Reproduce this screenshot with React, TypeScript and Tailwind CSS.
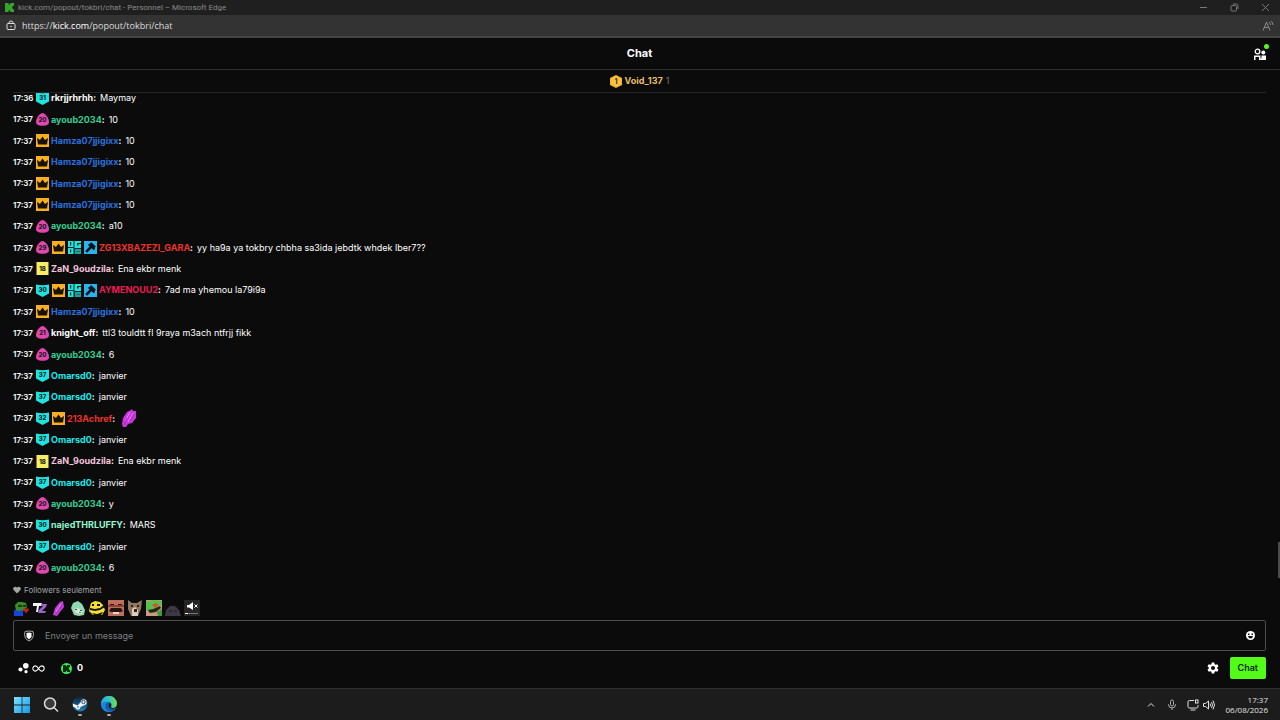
import { useState } from 'react';
import type { ReactNode } from 'react';

type Badge = 'crown' | 'og' | 'mod' | { kind: 'shield' | 'egg' | 'square'; level: number };

interface Message {
  time: string;
  badges: Badge[];
  user: string;
  color: string;
  text?: string;
  emote?: boolean;
}

const shield = (level: number): Badge => ({ kind: 'shield', level });
const egg = (level: number): Badge => ({ kind: 'egg', level });
const square = (level: number): Badge => ({ kind: 'square', level });

const ayoub = (text: string): Message => ({
  time: '17:37', badges: [egg(20)], user: 'ayoub2034', color: 'text-[#2fcf93]', text,
});
const hamza = (text: string): Message => ({
  time: '17:37', badges: ['crown'], user: 'Hamza07jjigixx', color: 'text-[#2a70de]', text,
});
const omar = (text: string): Message => ({
  time: '17:37', badges: [shield(37)], user: 'Omarsd0', color: 'text-[#1ce9e9]', text,
});
const zan = (text: string): Message => ({
  time: '17:37', badges: [square(18)], user: 'ZaN_9oudzila', color: 'text-[#f2c3dc]', text,
});

const messages: Message[] = [
  { time: '17:36', badges: [shield(31)], user: 'rkrjjrhrhh', color: 'text-white', text: 'Maymay' },
  ayoub('10'),
  hamza('10'),
  hamza('10'),
  hamza('10'),
  hamza('10'),
  ayoub('a10'),
  {
    time: '17:37', badges: [egg(29), 'crown', 'og', 'mod'], user: 'ZG13XBAZEZI_GARA', color: 'text-[#f0322a]',
    text: 'yy ha9a ya tokbry chbha sa3ida jebdtk whdek lber7??',
  },
  zan('Ena ekbr menk'),
  { time: '17:37', badges: [shield(30), 'crown', 'og', 'mod'], user: 'AYMENOUU2', color: 'text-[#ee1a55]', text: '7ad ma yhemou la79i9a' },
  hamza('10'),
  { time: '17:37', badges: [egg(21)], user: 'knight_off', color: 'text-white', text: 'ttl3 touldtt fl 9raya m3ach ntfrjj fikk' },
  ayoub('6'),
  omar('janvier'),
  omar('janvier'),
  { time: '17:37', badges: [shield(32), 'crown'], user: '213Achref', color: 'text-[#f0322a]', emote: true },
  omar('janvier'),
  zan('Ena ekbr menk'),
  omar('janvier'),
  ayoub('y'),
  { time: '17:37', badges: [shield(30)], user: 'najedTHRLUFFY', color: 'text-[#93f7cf]', text: 'MARS' },
  omar('janvier'),
  ayoub('6'),
];

function BadgeIcon({ badge }: { badge: Badge }) {
  if (badge === 'crown') {
    return (
      <svg viewBox="0 0 13 13" className="size-[13px] shrink-0">
        <path fill="#f9b01c" d="M0 0h13v13H0z" />
        <path fill="#191204" d="M1 4l3 2 2.5-3.500L9 6l3-2-1 6.500H2z" />
      </svg>
    );
  }
  if (badge === 'og') {
    return (
      <svg viewBox="0 0 13 13" className="size-[13px] shrink-0">
        <path fill="#0c2c2d" d="M0 0h13v13H0z" />
        <path fill="#22e2dc" fillRule="evenodd" d="M0 0h5.500v6H0zM2 1v3.500h1.200V1zM0 7h5.500v6H0zM2 8.500v3h1.200v-3zM6.500 0H13v2H9v2.500h1.500V3H13v4H6.500z" />
        <path fill="#1ba3a3" d="M7 8h6v5H7z" />
        <path stroke="#157277" d="M8 10.500h4" />
      </svg>
    );
  }
  if (badge === 'mod') {
    return (
      <svg viewBox="0 0 13 13" className="size-[13px] shrink-0">
        <path fill="#28b4ee" d="M0 0h13v13H0z" />
        <path fill="#06131b" d="M7 1l4.800 4.500-1 1.200.2 1.300-1.300 1.200L7.500 7.300l-4.300 4.500L1.200 10l4.400-4.500L4 4l1.200-1.200H6z" />
      </svg>
    );
  }
  return (
    <svg viewBox="0 0 13 13" className="size-[13px] shrink-0">
      {badge.kind === 'shield' && <path fill="#1ee4df" d="M0 .5Q6.500 1.800 13 .5v9L6.500 13 0 9.500z" />}
      {badge.kind === 'egg' && <path fill="#e046ac" d="M6.500 0C9.500 0 13 5.500 13 9c0 2.500-2 3.700-6.500 3.700S0 11.500 0 9c0-3.500 3.500-9 6.500-9z" />}
      {badge.kind === 'square' && <path fill="#f7ec62" d="M.5 0h12v13H.5z" />}
      <text
        x="6.5"
        y={badge.kind === 'shield' ? 8 : 9}
        textAnchor="middle"
        fontSize="6"
        fontWeight="800"
        fill="#11191b"
      >
        {badge.level}
      </text>
    </svg>
  );
}

function Wing({ className }: { className: string }) {
  return (
    <svg viewBox="0 0 16 18" className={className}>
      <path fill="#c936df" d="M1 15l1-6 4-6 4-2 1-1 1 2 3 0v7l-4 5-4 1-2 3H2z" />
      <path fill="none" stroke="#f07cf7" d="M4 12l5-9M7 13l5-9" />
      <path fill="none" stroke="#a52fb9" d="M3 16l3-7M9 12l4-7" />
    </svg>
  );
}

const emotes: { name: string; art: ReactNode }[] = [
  {
    name: 'pepe',
    art: (
      <>
        <path fill="#3d8b28" d="M2 5l3-3 4 0 4 1 1 4-3 4H3z" />
        <path fill="#163a12" d="M5 5h4v2H5zM10 5h3v2h-3z" />
        <path fill="#1445d8" d="M1 10l5 1 4-1v6H1z" />
        <path fill="#bd2118" d="M11 8l2 1 2-1 1 2-3 3-3-3z" />
      </>
    ),
  },
  {
    name: 'tz',
    art: (
      <>
        <path fill="#f3f3f3" d="M1 3h9L9 6H7l-1 6H4l1-6H1z" />
        <path fill="#9c62c8" d="M9 4h6l-1 3-4 4h4l-1 2H6l1-3 4-4H9z" />
      </>
    ),
  },
  {
    name: 'wing',
    art: (
      <>
        <path fill="#c63fdb" d="M2 15l2-7 5-6 3-1 1 6-4 5-3 4z" />
        <path stroke="#f07cf7" d="M5 12l5-8" />
        <path stroke="#8e2fa2" d="M5 14l6-9" />
      </>
    ),
  },
  {
    name: 'mint',
    art: (
      <>
        <path fill="#8fd8b4" d="M1 8l2-5 5-2 4 3 3 6-1 5-5 1-5-1z" />
        <path fill="#d5e8d8" d="M4 9l4-1 5 3-2 3-5-1z" />
        <path fill="#355b4a" d="M5 9h2v1H5zM10 10h2v1h-2z" />
        <path fill="#d0605d" d="M9 12h2v1H9z" />
      </>
    ),
  },
  {
    name: 'bee',
    art: (
      <>
        <path fill="#f6df32" d="M2 3l4-2 5 1 3 3 2 5-3 5H4l-4-4z" />
        <path fill="#16150a" d="M3 4h2v2H3zM8 4h3v2H8zM1 8l5 1 5-1 4-3 1 2-5 3-5 1-5-1zM3 13l5 1 6-2-2 3H5z" />
      </>
    ),
  },
  {
    name: 'laugh',
    art: (
      <>
        <path fill="#bd6e5d" d="M0 0h16v16H0z" />
        <path fill="#8d4238" d="M0 5h16v2H0z" />
        <path fill="#2b1311" d="M2 4h4v1H2zM10 4h4v1h-4zM3 8h10l2 3-2 1H3l-2-1z" />
        <path fill="#e6d3ca" d="M5 12h6v2H5z" />
      </>
    ),
  },
  {
    name: 'cat',
    art: (
      <>
        <path fill="#92765f" d="M1 0l4 3h5l5-3-1 9-3 7H4L1 9z" />
        <path fill="#dacbbc" d="M5 9l3-2 3 3v6H5z" />
        <path fill="#2e211c" d="M4 5h2v2H4zM10 5h2v2h-2zM7 9h3v3H7z" />
      </>
    ),
  },
  {
    name: 'lizard',
    art: (
      <>
        <path fill="#c99a7f" d="M0 0h16v16H0z" />
        <path fill="#54c24c" d="M0 2l7-2 9 1v4l-6 1-6 5-4-1z" />
        <path fill="#d0562e" d="M6 5l4-2 3 2-4 3z" />
        <path fill="#1e2918" d="M2 10l5-1 7-3 1 2-5 4-6 1z" />
        <path fill="#3f9a3e" d="M11 12l5-3v7h-4z" />
      </>
    ),
  },
  {
    name: 'shade',
    art: (
      <>
        <path fill="#3d3846" d="M0 15l1-5 4-4h5l4 4 2 6H0z" />
        <path fill="#2a2632" d="M4 10h3v2H4zM9 10h3v2H9z" />
      </>
    ),
  },
  {
    name: 'muted',
    art: (
      <>
        <path fill="#252525" d="M0 0h16v16H0z" />
        <path fill="#fff" d="M3 5h2l4-3v8L5 7.500H3z" />
        <path stroke="#fff" d="M10.500 4.500l3 3m0-3l-3 3M1 13.500h3" />
        <path stroke="#777" d="M4 13.500h10" />
      </>
    ),
  },
];

function KickMark({ className }: { className: string }) {
  return (
    <svg viewBox="0 0 10 10" className={className} fill="currentColor">
      <path d="M0 0h4v2h1V1h1V0h4v3H9v1H8v2h1v1h1v3H6V9H5V8H4v2H0z" />
    </svg>
  );
}

function BrowserBar() {
  return (
    <div className="shrink-0 font-['Open_Sans','Noto_Sans',sans-serif]">
      <div className="flex h-[15px] items-center bg-[#1f1f1f] pr-[10px] pl-[5px] text-[#8a8a8a]">
        <KickMark className="size-[9px] text-[#35a52c]" />
        <span className="ml-1 font-['Roboto',sans-serif] text-[8px]">
          kick.com/popout/tokbri/chat - Personnel – Microsoft Edge
        </span>
        <div className="ml-auto flex items-center gap-[22px] text-[#777]">
          <button aria-label="Réduire">
            <svg viewBox="0 0 9 9" className="size-[9px]" stroke="currentColor"><path d="M1 4.500h7" /></svg>
          </button>
          <button aria-label="Restaurer">
            <svg viewBox="0 0 9 9" className="size-[9px]" fill="none" stroke="currentColor">
              <rect x="1" y="2.500" width="5.500" height="5.500" rx="1" />
              <path d="M3 1h3.500Q8 1 8 2.500V6" />
            </svg>
          </button>
          <button aria-label="Fermer">
            <svg viewBox="0 0 9 9" className="size-[9px]" stroke="currentColor"><path d="M1 1l7 7m0-7L1 8" /></svg>
          </button>
        </div>
      </div>
      <div className="flex h-[23px] items-center border-b-2 border-[#444] bg-[#333] px-[6px] text-[#ddd]">
        <svg viewBox="0 0 10 11" className="h-[11px] w-[10px]" fill="none" stroke="currentColor">
          <rect x="1" y="3.500" width="8" height="6" rx="1" />
          <path d="M3 3.500V3a2 2 0 014 0v.5" />
          <circle cx="5" cy="6.500" r=".4" />
        </svg>
        <span className="ml-[6px] text-[9px]">
          https://<span className="text-white">kick.com</span>/popout/tokbri/chat
        </span>
        <button aria-label="Lecture à voix haute" className="ml-auto text-[#8d8d8d]">
          <svg viewBox="0 0 12 12" className="size-3" fill="none" stroke="currentColor">
            <path d="M1 10.500L4.500 2 8 10.500M2.500 7.500h4M7 2q1.500 1 1.500 3M9 1q2 1.500 2 4" />
          </svg>
        </button>
      </div>
    </div>
  );
}

function MessageRow({ message }: { message: Message }) {
  return (
    <li className="flex h-5 shrink-0 items-center">
      <time className="w-[23px] text-[8px] font-semibold">{message.time}</time>
      <span className="flex gap-[3px]">
        {message.badges.map((badge, i) => (
          <BadgeIcon key={i} badge={badge} />
        ))}
      </span>
      <span className={`ml-[2px] font-bold ${message.color}`}>{message.user}</span>
      <span className="font-semibold">:</span>
      {message.text && <span className="ml-1">{message.text}</span>}
      {message.emote && <Wing className="ml-[6px] h-[18px] w-4" />}
    </li>
  );
}

function Composer() {
  const [draft, setDraft] = useState('');

  return (
    <form className="shrink-0 pr-[14px] pb-[3px] pl-[13px]" onSubmit={(e) => e.preventDefault()}>
      <div className="flex h-[18px] items-center gap-[3px] pb-[2px] text-[8px] text-[#a2a5a7]">
        <svg viewBox="0 0 8 8" className="size-2" fill="currentColor">
          <path d="M4 7.500L.8 4.300C-1 2 1.800-.7 4 1.500 6.200-.7 9 2 7.200 4.300z" />
        </svg>
        Followers seulement
      </div>
      <div className="flex gap-[3px] pb-1">
        {emotes.map((emote) => (
          <button key={emote.name} type="button" aria-label={emote.name}>
            <svg viewBox="0 0 16 16" className="size-4">{emote.art}</svg>
          </button>
        ))}
      </div>
      <div className="flex h-[31px] items-center rounded-xs border border-[#4b4d4f] px-[9px]">
        <svg viewBox="0 0 12 12" className="size-3" fill="none">
          <path stroke="#a8a8a8" d="M2 1.500L6 1l4 .5q1 3 0 5.500Q9 10 6 11 3 10 2 7 1 4 2 1.500z" />
          <path fill="#fff" d="M3.500 3L6 2.500 8.500 3v4L6 9.500 3.500 7z" />
        </svg>
        <input
          aria-label="Envoyer un message"
          placeholder="Envoyer un message"
          value={draft}
          onChange={(e) => setDraft(e.target.value)}
          className="ml-[10px] min-w-0 flex-1 bg-transparent text-[9px] text-white outline-none placeholder:text-[#7c8082]"
        />
        <button type="button" aria-label="Émoticônes" className="mr-[1px]">
          <svg viewBox="0 0 9 9" className="size-[9px]">
            <circle cx="4.500" cy="4.500" r="4.500" fill="#fff" />
            <path fill="#111" d="M2 2.500h1.500V4H2zM5.500 2.500H7V4H5.500zM2 5h5Q6.500 7.500 4.500 7.500T2 5z" />
          </svg>
        </button>
      </div>
      <div className="flex h-[34px] items-center">
        <svg viewBox="0 0 12 12" className="ml-[5px] size-3" fill="#fff">
          <circle cx="2.500" cy="7.500" r="2.100" />
          <circle cx="7.800" cy="3.700" r="2.800" />
          <circle cx="8" cy="9.700" r="1.600" />
        </svg>
        <svg viewBox="0 0 14 8" className="ml-[2px] h-[7px] w-[13px]" fill="none" stroke="#fff" strokeWidth="1.200">
          <path d="M7 4C5 1 4 1 3.500 1a3 3 0 000 6C5 7 6 5.500 7 4s2-3 3.500-3a3 3 0 010 6C9 7 8 5.500 7 4z" />
        </svg>
        <span className="ml-4 grid size-[11px] place-items-center rounded-full bg-[#3fe858]">
          <KickMark className="size-[7px] text-[#0b2b0d]" />
        </span>
        <span className="ml-[5px] text-[9px] font-bold">0</span>
        <button type="button" aria-label="Paramètres" className="ml-auto">
          <svg viewBox="0 0 24 24" className="size-3" fill="#fff">
            <path fillRule="evenodd" d="M9.500 1h5l.7 3.500 2 1.200L20.600 4.500 23 8.800 20.300 11v2l2.700 2.200-2.400 4.300-3.400-1.200-2 1.200-.7 3.500h-5l-.7-3.500-2-1.200-3.400 1.200L1 15.200 3.700 13v-2L1 8.800l2.400-4.300 3.400 1.200 2-1.200zM12 8a4 4 0 100 8 4 4 0 000-8z" />
          </svg>
        </button>
        <button type="submit" className="ml-[11px] h-[22px] rounded-xs bg-[#53fc18] px-2 text-[9px] font-semibold text-[#0b2b0d]">
          Chat
        </button>
      </div>
    </form>
  );
}

function Taskbar() {
  return (
    <footer className="flex h-8 shrink-0 items-center border-t border-[#303030] bg-[#1c1c1c] pr-3 pl-[14px] font-['Open_Sans','Noto_Sans',sans-serif]">
      <div className="flex items-center gap-[13px]">
        <button aria-label="Démarrer">
          <svg viewBox="0 0 16 16" className="size-4">
            <defs>
              <linearGradient id="win" x2="1" y2="1">
                <stop stopColor="#7be3ff" />
                <stop offset="1" stopColor="#1798e6" />
              </linearGradient>
            </defs>
            <path fill="url(#win)" d="M0 0h7.600v7.600H0zM8.400 0H16v7.600H8.400zM0 8.400h7.600V16H0zM8.400 8.400H16V16H8.400z" />
          </svg>
        </button>
        <button aria-label="Rechercher">
          <svg viewBox="0 0 16 16" className="size-4" fill="#3a3a3a" stroke="#ddd" strokeWidth="1.500">
            <circle cx="7" cy="6.500" r="5.500" />
            <path d="M11 10.500l4 4" />
          </svg>
        </button>
        <button aria-label="Steam" className="flex flex-col items-center">
          <svg viewBox="0 0 16 16" className="mt-[3px] size-4">
            <defs>
              <linearGradient id="steam" x2="0" y2="1">
                <stop stopColor="#10213d" />
                <stop offset="1" stopColor="#1b83b9" />
              </linearGradient>
            </defs>
            <circle cx="8" cy="8" r="7.500" fill="url(#steam)" />
            <path fill="#f4f4f4" d="M.7 7.500l5 2 3-3.500a3 3 0 113.500 3.300L8.500 11a2.500 2.500 0 01-4.800 1L1 10.500z" />
            <circle cx="11.500" cy="6" r="1.700" fill="none" stroke="#24435f" />
            <circle cx="6" cy="11" r="1.200" fill="#8fb0c2" />
          </svg>
          <span className="mt-[2px] h-[2px] w-1 rounded-full bg-[#aaa]" />
        </button>
        <button aria-label="Microsoft Edge" className="flex flex-col items-center">
          <svg viewBox="0 0 16 16" className="mt-[3px] size-4">
            <defs>
              <linearGradient id="edge" x1="0" x2="1">
                <stop stopColor="#24a9e5" />
                <stop offset=".5" stopColor="#33c6c0" />
                <stop offset="1" stopColor="#70e04a" />
              </linearGradient>
            </defs>
            <path fill="#1b86d6" d="M0 7.500C1 5 4 4 6.500 5S9 7 8 8c-1.500 2 0 5 3.500 5 1.500 0 2.700-.5 3.500-1a8 8 0 01-15-4.500z" />
            <path fill="#1258ae" d="M5 8c-1.500 3 .5 7.500 5 7.500 2 0 4-1.500 5-3.500-1 .6-2 1-3.500 1C8 13 6.500 10 8 8c.5-1-1.500-2-3 0z" />
            <path fill="url(#edge)" d="M0 8a8 8 0 0116-.5c0 3-2 4.500-4.500 4.500-1.700 0-2.200-.8-1.500-1.500C11.500 8.500 9.500 5.500 6 5.500 3 5.500 1 6.500 0 8z" />
          </svg>
          <span className="mt-[2px] h-[2px] w-1 rounded-full bg-[#aaa]" />
        </button>
      </div>
      <div className="ml-auto flex items-center text-[#e2e2e2]">
        <button aria-label="Icônes masquées">
          <svg viewBox="0 0 8 8" className="size-2" fill="none" stroke="currentColor"><path d="M1 5.500l3-3 3 3" /></svg>
        </button>
        <svg viewBox="0 0 10 12" className="ml-3 h-3 w-[10px] text-[#aaa]" fill="none" stroke="currentColor">
          <rect x="3.500" y="1" width="3" height="6" rx="1.500" />
          <path d="M1.500 5v.5a3.500 3.500 0 007 0V5M5 9v2" />
        </svg>
        <svg viewBox="0 0 12 12" className="ml-[10px] size-3" fill="none" stroke="currentColor">
          <path d="M7 1.500H2.500Q1 1.500 1 3v4.500Q1 9 2.500 9h7Q11 9 11 7.500V6M3.500 11h5" />
          <rect x="8.500" y="1" width="2.500" height="3" />
        </svg>
        <svg viewBox="0 0 12 12" className="ml-1 size-3" fill="none" stroke="currentColor">
          <path d="M.5 4.500h2L5.500 2v8l-3-2.500h-2zM7 4.500q1 1.500 0 3M8.500 3q2 3 0 6M10 1.500q3 4.500 0 9" />
        </svg>
        <div className="ml-[11px] text-right text-[8px] leading-[10px]">
          <div>17:37</div>
          <div>06/08/2026</div>
        </div>
      </div>
    </footer>
  );
}

export default function App() {
  return (
    <div className="flex h-dvh flex-col bg-[#0b0b0b] font-['Inter',sans-serif] text-[9px] text-white">
      <BrowserBar />
      <header className="flex h-8 shrink-0 items-center border-b border-[#303030] pr-[14px] pl-[13px]">
        <span className="w-3" />
        <h1 className="flex-1 text-center text-[11px] font-bold">Chat</h1>
        <button aria-label="Utilisateurs" className="relative">
          <svg viewBox="0 0 12 12" className="size-3" fill="#fff">
            <circle cx="3.500" cy="3.500" r="2.300" fill="none" stroke="#fff" strokeWidth="1.300" />
            <circle cx="9.300" cy="4.500" r="2" />
            <path d="M0 7.500h6.500V12H5V9H1.500v3H0zM7.500 7.500H12V12H5.500v-1.500h2z" />
          </svg>
          <span className="absolute -top-1 -right-[3px] size-[5px] rounded-full bg-[#53fc18]" />
        </button>
      </header>
      <div className="mr-[14px] ml-[13px] flex h-[23px] shrink-0 items-center justify-center gap-[3px] border-b border-[#242424]">
        <svg viewBox="0 0 12 13" className="h-[13px] w-3">
          <path fill="#f3b52f" d="M6 0l6 3v7l-6 3-6-3V3z" />
          <path fill="#fbc646" d="M6 1.500l4.500 2.300v5.400L6 11.500 1.500 9.200V3.800z" />
          <text x="6" y="9" textAnchor="middle" fontSize="7" fontWeight="800" fill="#5a340a">1</text>
        </svg>
        <span className="font-bold text-[#e9bd68]">Void_137</span>
        <span className="text-[#777]">1</span>
      </div>
      <main className="relative flex min-h-0 flex-1 flex-col overflow-hidden">
        <ul className="-mt-[5px] mb-1 flex flex-1 flex-col justify-between pr-[14px] pl-[13px]">
          {messages.map((message, i) => (
            <MessageRow key={i} message={message} />
          ))}
        </ul>
        <div className="absolute right-0 bottom-1 h-9 w-[2px] bg-[#4c4c4c]" />
      </main>
      <Composer />
      <Taskbar />
    </div>
  );
}
